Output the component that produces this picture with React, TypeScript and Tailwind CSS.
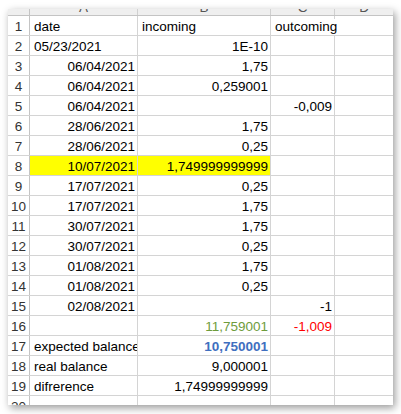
import React from 'react';

type Cell = { text?: string; align?: 'left' | 'right'; color?: string; bold?: boolean; spill?: boolean };
type Row = { n: number; cells: Cell[]; highlight?: boolean };

const L = (text: string): Cell => ({ text, align: 'left' });
const R = (text: string): Cell => ({ text, align: 'right' });
const E: Cell = {};

const rows: Row[] = [
  { n: 1, cells: [L('date'), L('incoming'), { text: 'outcoming', align: 'left', spill: true }, E] },
  { n: 2, cells: [L('05/23/2021'), R('1E-10'), E, E] },
  { n: 3, cells: [R('06/04/2021'), R('1,75'), E, E] },
  { n: 4, cells: [R('06/04/2021'), R('0,259001'), E, E] },
  { n: 5, cells: [R('06/04/2021'), E, R('-0,009'), E] },
  { n: 6, cells: [R('28/06/2021'), R('1,75'), E, E] },
  { n: 7, cells: [R('28/06/2021'), R('0,25'), E, E] },
  { n: 8, cells: [R('10/07/2021'), R('1,749999999999'), E, E], highlight: true },
  { n: 9, cells: [R('17/07/2021'), R('0,25'), E, E] },
  { n: 10, cells: [R('17/07/2021'), R('1,75'), E, E] },
  { n: 11, cells: [R('30/07/2021'), R('1,75'), E, E] },
  { n: 12, cells: [R('30/07/2021'), R('0,25'), E, E] },
  { n: 13, cells: [R('01/08/2021'), R('1,75'), E, E] },
  { n: 14, cells: [R('01/08/2021'), R('0,25'), E, E] },
  { n: 15, cells: [R('02/08/2021'), E, R('-1'), E] },
  {
    n: 16,
    cells: [E, { text: '11,759001', align: 'right', color: 'text-[#6e9c3c]' }, { text: '-1,009', align: 'right', color: 'text-[#ff0000]' }, E],
  },
  { n: 17, cells: [L('expected balance'), { text: '10,750001', align: 'right', color: 'text-[#3f6fbf]', bold: true }, E, E] },
  { n: 18, cells: [L('real balance'), R('9,000001'), E, E] },
  { n: 19, cells: [L('difrerence'), R('1,74999999999'), E, E] },
  { n: 20, cells: [E, E, E, E] },
];

const widths = ['w-[108px]', 'w-[133px]', 'w-[64px]', 'flex-1'];
const letters = ['A', 'B', 'C', 'D'];

const App: React.FC = () => {
  return (
    <div className="w-[401px] h-[414px] bg-white pt-[9px] pl-[8px] font-['Liberation_Sans',Arial,sans-serif] text-[13.5px] text-black">
      <div className="w-[385px] h-[396px] overflow-hidden bg-white shadow-[2px_3px_8px_rgba(0,0,0,0.4)]">
        {/* column letters, mostly scrolled out of view */}
        <div className="flex h-[7px] bg-[#efefef] border-b border-[#c4c4c4]">
          <div className="w-[22px] border-r border-[#c4c4c4]" />
          {letters.map((l, i) => (
            <div key={l} className={`${widths[i]} flex justify-center overflow-hidden ${i < 3 ? 'border-r border-[#d0d0d0]' : ''}`}>
              <span className="leading-[13px] -mt-[8px] text-[#555]">{l}</span>
            </div>
          ))}
        </div>
        {rows.map((row) => (
          <div key={row.n} className="flex h-[20px] border-b border-[#d4d4d4]">
            <div className="w-[22px] flex items-end justify-center border-r border-[#c4c4c4] text-[#333] leading-[16px]">
              {row.n}
            </div>
            {row.cells.map((c, i) => (
              <div
                key={i}
                className={`${widths[i]} flex items-end whitespace-nowrap leading-[16px] ${
                  c.spill ? 'overflow-visible' : 'overflow-hidden'
                } ${i < 3 ? 'border-r border-[#d4d4d4]' : ''} ${row.highlight && i < 2 ? 'bg-[#ffff00]' : ''} ${
                  c.align === 'right' ? 'justify-end pr-[2px]' : 'justify-start pl-[4px]'
                } ${c.color ?? ''} ${c.bold ? 'font-bold' : ''}`}
              >
                {c.spill ? <span className="relative z-10 bg-white">{c.text}</span> : c.text}
              </div>
            ))}
          </div>
        ))}
      </div>
    </div>
  );
};

export default App;
